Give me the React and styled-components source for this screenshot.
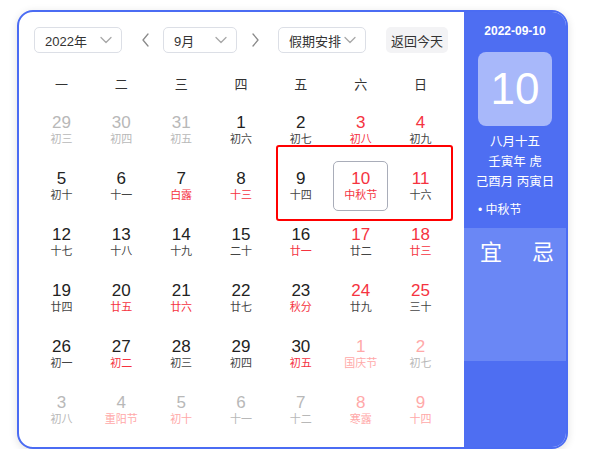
import React from 'react'
import styled, { createGlobalStyle } from 'styled-components'

const GlobalStyle = createGlobalStyle`
  html, body {
    margin: 0;
    padding: 0;
    background: #fff;
  }
  body {
    font-family: "Liberation Sans", "Noto Sans CJK SC", sans-serif;
  }
`

const RED = '#f5333f'
const PALE_RED = '#ffa9a9'
const GRAY = '#b8b8b8'

const Page = styled.div`
  padding: 10px 0 0 17px;
`

const Card = styled.div`
  box-sizing: border-box;
  width: 551px;
  height: 439px;
  display: flex;
  border: 2px solid #4b6cf3;
  border-radius: 16px;
  overflow: hidden;
  background: #fff;
  box-shadow: 0 2px 8px rgba(0, 0, 0, 0.12);
`

const Main = styled.div`
  width: 445px;
  box-sizing: border-box;
  padding: 15px 16px 0 15px;
`

const Toolbar = styled.div`
  display: flex;
  align-items: center;
  height: 26px;
`

const Select = styled.div`
  box-sizing: border-box;
  width: ${p => p.$w}px;
  height: 26px;
  display: flex;
  align-items: center;
  justify-content: space-between;
  padding: 0 9px 0 10px;
  border: 1px solid #dcdfe6;
  border-radius: 5px;
  font-size: 13px;
  color: #333;
`

const ArrowButton = styled.div`
  width: 24px;
  height: 26px;
  display: flex;
  align-items: center;
  justify-content: center;
  margin: ${p => p.$m};
`

const TodayButton = styled.div`
  margin-left: auto;
  width: 62px;
  height: 26px;
  display: flex;
  align-items: center;
  justify-content: center;
  background: #f3f3f5;
  border-radius: 5px;
  font-size: 13px;
  color: #333;
`

const WeekRow = styled.div`
  display: grid;
  grid-template-columns: repeat(7, 1fr);
  column-gap: 5px;
  margin-top: 22px;
  height: 20px;
  line-height: 20px;
  font-size: 13px;
  color: #333;
  text-align: center;
`

const Grid = styled.div`
  position: relative;
  display: grid;
  grid-template-columns: repeat(7, 1fr);
  grid-auto-rows: 50px;
  column-gap: 5px;
  row-gap: 6px;
  margin-top: 10px;
`

const Cell = styled.div`
  box-sizing: border-box;
  display: flex;
  flex-direction: column;
  align-items: center;
  justify-content: center;
  border: 1.5px solid ${p => (p.$selected ? '#a9adb9' : 'transparent')};
  border-radius: 5px;
`

const Day = styled.div`
  font-size: 17px;
  line-height: 19px;
  color: ${p => p.$c};
`

const Lunar = styled.div`
  font-size: 11px;
  line-height: 15px;
  color: ${p => p.$c};
`

const Highlight = styled.div`
  position: absolute;
  left: 242px;
  top: 40px;
  width: 177px;
  height: 76px;
  box-sizing: border-box;
  border: 2px solid #ff0000;
  border-radius: 3px;
  pointer-events: none;
`

const Side = styled.div`
  flex: 1;
  display: flex;
  flex-direction: column;
  align-items: center;
  padding-top: 11px;
  background: #4e6ef2;
  color: #fff;
`

const SideDate = styled.div`
  font-size: 12px;
  font-weight: bold;
  line-height: 16px;
`

const BigDay = styled.div`
  margin-top: 13px;
  width: 74px;
  height: 74px;
  border-radius: 8px;
  background: #a8b8fa;
  display: flex;
  align-items: center;
  justify-content: center;
  font-size: 44px;
  font-family: "Liberation Sans", sans-serif;
`

const LunarInfo = styled.div`
  margin-top: 6px;
  font-size: 12.5px;
  line-height: 20px;
  text-align: center;
`

const Festival = styled.div`
  align-self: stretch;
  margin-top: 8px;
  padding-left: 14px;
  font-size: 12px;
  line-height: 20px;
`

const Band = styled.div`
  align-self: stretch;
  margin-top: 8px;
  height: 133px;
  box-sizing: border-box;
  padding: 11px 12px 0 16px;
  background: #6a87f5;
  display: flex;
  justify-content: space-between;
  align-items: flex-start;
  font-size: 22px;
  line-height: 28px;
`

const Chevron = ({ dir }) => {
  const d = {
    down: 'M1 1.5 L6 6.5 L11 1.5',
    left: 'M6 1 L1 7 L6 13',
    right: 'M1 1 L6 7 L1 13',
  }[dir]
  const size = dir === 'down' ? { w: 12, h: 8 } : { w: 7, h: 14 }
  return (
    <svg width={size.w} height={size.h} viewBox={`0 0 ${size.w} ${size.h}`} fill="none">
      <path d={d} stroke={dir === 'down' ? '#a8a8a8' : '#8a8a8a'} strokeWidth="1.3" strokeLinecap="round" strokeLinejoin="round" />
    </svg>
  )
}

// [day, lunar, dayColor, lunarColor]
const K = '#222'
const L = '#444'
const days = [
  ['29', '初三', GRAY, GRAY], ['30', '初四', GRAY, GRAY], ['31', '初五', GRAY, GRAY],
  ['1', '初六', K, L], ['2', '初七', K, L], ['3', '初八', RED, RED], ['4', '初九', RED, L],
  ['5', '初十', K, L], ['6', '十一', K, L], ['7', '白露', K, RED], ['8', '十三', K, RED],
  ['9', '十四', K, L], ['10', '中秋节', RED, RED, true], ['11', '十六', RED, L],
  ['12', '十七', K, L], ['13', '十八', K, L], ['14', '十九', K, L], ['15', '二十', K, L],
  ['16', '廿一', K, RED], ['17', '廿二', RED, L], ['18', '廿三', RED, RED],
  ['19', '廿四', K, L], ['20', '廿五', K, RED], ['21', '廿六', K, RED], ['22', '廿七', K, L],
  ['23', '秋分', K, RED], ['24', '廿九', RED, L], ['25', '三十', RED, L],
  ['26', '初一', K, L], ['27', '初二', K, RED], ['28', '初三', K, L], ['29', '初四', K, L],
  ['30', '初五', K, RED], ['1', '国庆节', PALE_RED, PALE_RED], ['2', '初七', PALE_RED, GRAY],
  ['3', '初八', GRAY, GRAY], ['4', '重阳节', GRAY, PALE_RED], ['5', '初十', GRAY, PALE_RED],
  ['6', '十一', GRAY, GRAY], ['7', '十二', GRAY, GRAY], ['8', '寒露', PALE_RED, PALE_RED],
  ['9', '十四', PALE_RED, PALE_RED],
]

const weekdays = ['一', '二', '三', '四', '五', '六', '日']

export default function App() {
  return (
    <Page>
      <GlobalStyle />
      <Card>
        <Main>
          <Toolbar>
            <Select $w={88}>2022年<Chevron dir="down" /></Select>
            <ArrowButton $m="0 6px 0 11px"><Chevron dir="left" /></ArrowButton>
            <Select $w={74}>9月<Chevron dir="down" /></Select>
            <ArrowButton $m="0 11px 0 6px"><Chevron dir="right" /></ArrowButton>
            <Select $w={88}>假期安排<Chevron dir="down" /></Select>
            <TodayButton>返回今天</TodayButton>
          </Toolbar>
          <WeekRow>
            {weekdays.map(w => <div key={w}>{w}</div>)}
          </WeekRow>
          <Grid>
            {days.map(([d, l, dc, lc, sel], i) => (
              <Cell key={i} $selected={sel}>
                <Day $c={dc}>{d}</Day>
                <Lunar $c={lc}>{l}</Lunar>
              </Cell>
            ))}
            <Highlight />
          </Grid>
        </Main>
        <Side>
          <SideDate>2022-09-10</SideDate>
          <BigDay>10</BigDay>
          <LunarInfo>
            <div>八月十五</div>
            <div>壬寅年 虎</div>
            <div>己酉月 丙寅日</div>
          </LunarInfo>
          <Festival>• 中秋节</Festival>
          <Band>
            <span>宜</span>
            <span>忌</span>
          </Band>
        </Side>
      </Card>
    </Page>
  )
}
